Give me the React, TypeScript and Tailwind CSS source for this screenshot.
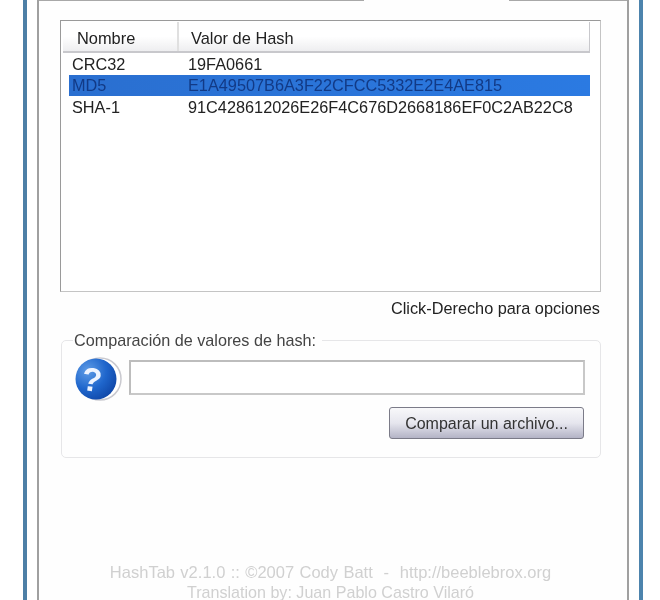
import { useId } from "react";

const rows = [
  { name: "CRC32", hash: "19FA0661" },
  { name: "MD5", hash: "E1A49507B6A3F22CFCC5332E2E4AE815", selected: true },
  { name: "SHA-1", hash: "91C428612026E26F4C676D2668186EF0C2AB22C8" },
];

function HelpIcon() {
  const id = useId();
  return (
    <svg width="48" height="48" viewBox="0 0 48 48" className="shrink-0 mt-[4px]">
      <defs>
        <radialGradient id={id} cx="0.3" cy="0.3" r="0.9">
          <stop offset="0" stopColor="#5f9ce6" />
          <stop offset="0.5" stopColor="#1f66cc" />
          <stop offset="1" stopColor="#0b3d9c" />
        </radialGradient>
      </defs>
      <circle cx="26" cy="24" r="21" fill="#fff" stroke="#c9c9cf" strokeWidth="1.5" />
      <circle cx="22" cy="24" r="20.5" fill={`url(#${id})`} />
      <text x="18" y="36" textAnchor="middle" fontSize="33" fontWeight="700" fill="#eef4ff" fontFamily="'Liberation Sans', sans-serif" transform="rotate(8 18 24)">
        ?
      </text>
    </svg>
  );
}

export default function App() {
  return (
    <div className="w-[660px] h-[600px] overflow-hidden bg-white pl-[23px] pr-[17px] font-['Liberation_Sans',sans-serif] text-[#222] text-[16px] blur-[0.4px]">
      <div className="h-full border-x-[4px] border-l-[#4d7fa6] border-r-[#4d84ad] px-[10px]">
        <div className="h-full flex flex-col border-x-2 border-x-[#a0a0a0] bg-[#fefefe]">
          <div className="flex h-px shrink-0">
            <div className="w-[325px] bg-[#a8a8a8]" />
            <div className="w-[145px]" />
            <div className="flex-1 bg-[#a8a8a8]" />
          </div>

          <div className="pl-[21px] pr-[26px] pt-[19px] flex flex-col">
            <div className="h-[272px] border border-[#9a9a9a] border-r-[#c4c4c4] border-b-[#c4c4c4] pl-[2px] pr-[10px] pt-px bg-white">
              <div className="flex h-[31px] border-b-2 border-r border-[#c8c8cc] bg-gradient-to-b from-white via-white to-[#eeeef0] text-[16.4px] leading-[33px]">
                <div className="w-[116px] pl-[14px] border-r-2 border-[#e0e0e0]">Nombre</div>
                <div className="pl-[12px]">Valor de Hash</div>
              </div>
              <div className="pl-[6px]">
                {rows.map((row) => (
                  <div
                    key={row.name}
                    className={
                      row.selected
                        ? "flex h-[21px] leading-[21px] bg-gradient-to-r from-[#2a6fd0] to-[#2b7ae2] text-[#123a86] text-[16.3px]"
                        : "flex h-[22px] leading-[22px] text-[16.3px]"
                    }
                  >
                    <div className="w-[119px] pl-[3px]">{row.name}</div>
                    <div>{row.hash}</div>
                  </div>
                ))}
              </div>
            </div>

            <div className="text-right text-[16.3px] leading-5 mt-[6px] mr-[1px]">Click-Derecho para opciones</div>

            <fieldset className="mt-[12px] ml-[1px] mr-0 h-[128px] rounded-[5px] border border-[#e6e6e8] pl-[12px] pr-[15px]">
              <legend className="px-[1px] -ml-[1px] text-[16.2px] leading-5 text-[#444]">
                Comparación de valores de hash:&nbsp;
              </legend>
              <div className="flex items-start gap-[7px] mt-[1px]">
                <HelpIcon />
                <div className="h-[35px] flex-1 mt-[9px] border-2 border-[#bdbdbd] border-r-[#c8c8c8] border-b-[#c8c8c8] bg-white" />
              </div>
              <div className="flex justify-end mt-[4px]">
                <button className="h-[32px] w-[195px] mr-[1px] pt-[2px] rounded-[3px] border border-[#7b7b88] bg-gradient-to-b from-[#f8f8fa] via-[#e6e6ee] to-[#b4b4c6] text-[16px] text-[#333]">
                  Comparar un archivo...
                </button>
              </div>
            </fieldset>

            <div className="mt-[104px] text-center text-[#d0d0d0] text-[16.1px] leading-[20px]">
              <p className="text-[16.5px] [word-spacing:0.8px]">HashTab v2.1.0 :: ©2007 Cody Batt &nbsp;-&nbsp; http://beeblebrox.org</p>
              <p>Translation by: Juan Pablo Castro Vilaró</p>
            </div>
          </div>
        </div>
      </div>
    </div>
  );
}
